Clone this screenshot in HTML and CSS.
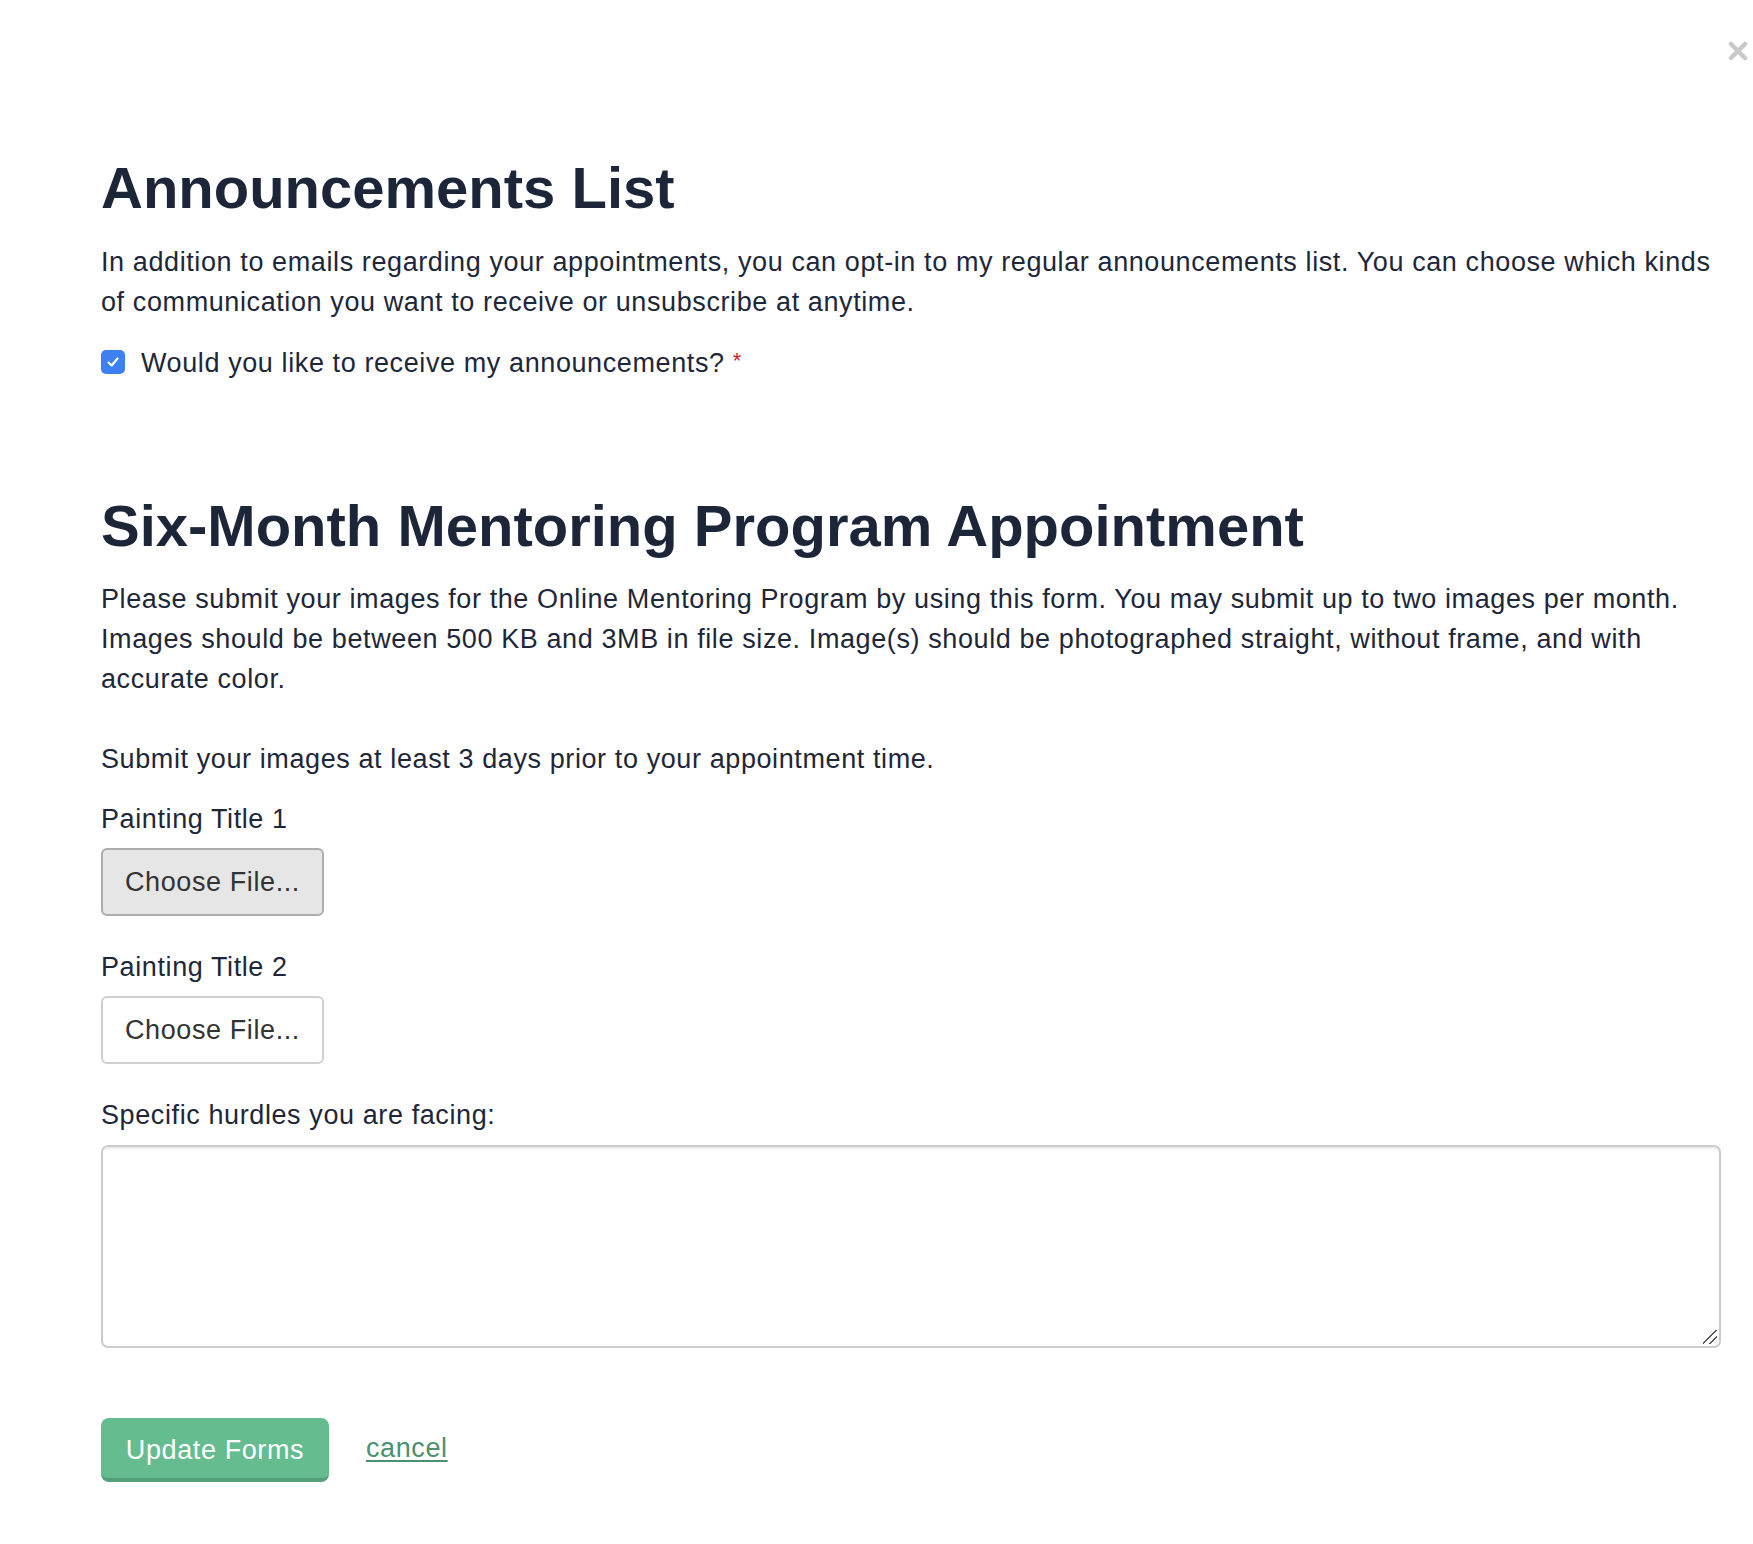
FILE: index.html
```html
<!DOCTYPE html>
<html lang="en">
<head>
<meta charset="utf-8">
<title>Forms</title>
<link rel="stylesheet" href="styles.css">
</head>
<body>
<div class="modal">
  <button class="close" aria-label="Close">
    <svg width="20" height="20" viewBox="0 0 20 20"><path d="M3 3 L17 17 M17 3 L3 17" stroke="#c9c9c9" stroke-width="4.5" stroke-linecap="round" fill="none"/></svg>
  </button>
  <h1 class="title">Announcements List</h1>
  <p class="text">In addition to emails regarding your appointments, you can opt-in to my regular announcements list. You can choose which kinds of communication you want to receive or unsubscribe at anytime.</p>
  <label class="check-row">
    <span class="checkbox"><svg width="16" height="16" viewBox="0 0 16 16"><path d="M3.5 8.5 L6.7 11.5 L12.5 4.5" stroke="#fff" stroke-width="2.2" fill="none" stroke-linecap="round" stroke-linejoin="round"/></svg></span>
    <span>Would you like to receive my announcements? <span class="req">*</span></span>
  </label>

  <h1 class="title title-2">Six-Month Mentoring Program Appointment</h1>
  <p class="text text-tight">Please submit your images for the Online Mentoring Program by using this form. You may submit up to two images per month. Images should be between 500 KB and 3MB in file size. Image(s) should be photographed straight, without frame, and with accurate color.</p>
  <p class="text spaced">Submit your images at least 3 days prior to your appointment time.</p>

  <div class="field first">
    <div class="label">Painting Title 1</div>
    <span class="file-btn active">Choose File...</span>
  </div>
  <div class="field">
    <div class="label">Painting Title 2</div>
    <span class="file-btn">Choose File...</span>
  </div>
  <div class="field">
    <div class="label label-area">Specific hurdles you are facing:</div>
    <div class="textarea"><span class="grip"></span></div>
  </div>

  <div class="actions">
    <span class="submit">Update Forms</span>
    <a class="cancel" href="#">cancel</a>
  </div>
</div>
</body>
</html>
```

FILE: styles.css
```css
html, body {
  margin: 0;
  padding: 0;
  background: #ffffff;
}
body {
  font-family: "Liberation Sans", Arial, Helvetica, sans-serif;
  color: #1d2739;
  font-size: 27px;
  line-height: 40px;
  letter-spacing: 0.6px;
}
.modal {
  position: relative;
  padding: 152px 32px 60px 101px;
}
.close {
  position: absolute;
  top: 41px;
  right: 5px;
  width: 20px;
  height: 20px;
  padding: 0;
  border: 0;
  background: none;
  display: flex;
}
.title {
  margin: 0;
  font-size: 58px;
  line-height: 72px;
  font-weight: 700;
  color: #1c2638;
  letter-spacing: 0;
}
.title-2 {
  margin-top: 107px;
}
.text {
  margin: 18px 0 0 0;
}
.text-tight {
  margin-top: 17px;
}
.spaced {
  margin-top: 40px;
}
.check-row {
  display: flex;
  align-items: center;
  gap: 16px;
  margin-top: 19px;
}
.checkbox {
  width: 24px;
  height: 24px;
  border-radius: 5px;
  background: #3c80f3;
  display: flex;
  align-items: center;
  justify-content: center;
  flex: none;
}
.req {
  color: #c62828;
  font-size: 22px;
  vertical-align: 4px;
}
.field {
  margin-top: 31px;
}
.field.first {
  margin-top: 20px;
}
.label {
  margin-bottom: 9px;
}
.label-area {
  margin-bottom: 10px;
}
.file-btn {
  display: inline-block;
  width: 223px;
  box-sizing: border-box;
  padding: 12px 0;
  text-align: center;
  border: 2px solid #cfcfcf;
  border-radius: 6px;
  background: #ffffff;
  color: #333333;
}
.file-btn.active {
  background: #e6e6e6;
  border-color: #adadad;
}
.textarea {
  position: relative;
  height: 203px;
  box-sizing: border-box;
  border: 2px solid #cccccc;
  border-radius: 7px;
  box-shadow: inset 0 2px 2px rgba(0, 0, 0, 0.08);
}
.grip {
  position: absolute;
  right: 2px;
  bottom: 2px;
  width: 14px;
  height: 14px;
  background:
    linear-gradient(135deg, transparent 45%, #555 45%, #555 53%, transparent 53%, transparent 70%, #555 70%, #555 78%, transparent 78%);
}
.actions {
  display: flex;
  align-items: center;
  gap: 37px;
  margin-top: 70px;
}
.submit {
  display: inline-block;
  width: 228px;
  box-sizing: border-box;
  text-align: center;
  padding: 12px 0 8px;
  background: #64bc8f;
  border-bottom: 4px solid #539f78;
  border-radius: 8px;
  color: #ffffff;
}
.cancel {
  color: #4a9170;
  text-decoration: underline;
  text-underline-offset: 3px;
  margin-top: -4px;
}
```
